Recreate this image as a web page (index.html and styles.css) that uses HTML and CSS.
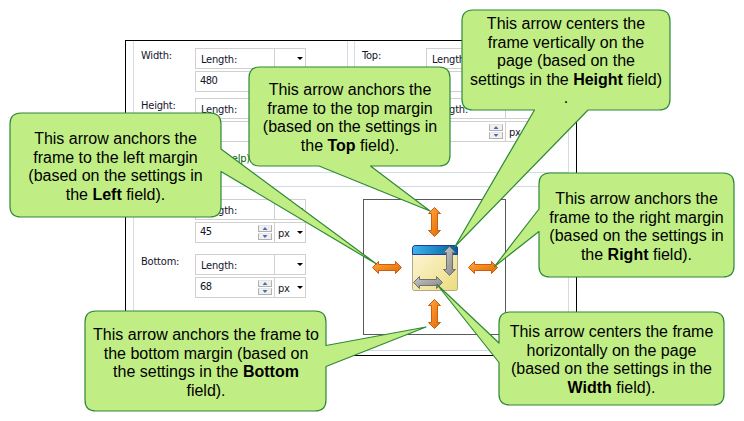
FILE: index.html
```html
<!DOCTYPE html>
<html lang="en">
<head>
<meta charset="utf-8">
<title>Frame position arrows</title>
<link rel="stylesheet" href="styles.css">
</head>
<body>
<main class="figure">
  <section class="dialog">
    <div class="top-row">
      <div class="group">
        <div class="row"><label class="label">Width:</label>
          <div class="fields">
            <div class="combo"><span class="value">Length:</span><span class="drop"><i class="caret"></i></span></div>
            <div class="combo"><span class="number">480</span><span class="drop"></span></div>
          </div>
        </div>
        <div class="row"><label class="label">Height:</label>
          <div class="fields">
            <div class="combo"><span class="value">Length:</span><span class="drop"></span></div>
            <div class="combo"><span class="number"></span><span class="drop"></span></div>
          </div>
        </div>
        <div class="help">(help)</div>
      </div>
      <div class="group">
        <div class="row"><label class="label label-wide">Top:</label>
          <div class="fields">
            <div class="combo"><span class="value">Length:</span><span class="drop"></span></div>
            <div class="combo"><span class="number"></span><span class="drop"></span></div>
          </div>
        </div>
        <div class="row"><label class="label label-wide"></label>
          <div class="fields">
            <div class="combo"><span class="value">Length:</span><span class="drop"></span></div>
            <div class="combo"><span class="number"></span><span class="spin"><b><i class="up"></i></b><b><i class="down"></i></b></span><span class="drop unit">px<i class="caret"></i></span></div>
          </div>
        </div>
      </div>
    </div>
    <div class="group bottom-row">
      <div class="column">
        <div class="row"><label class="label"></label>
          <div class="fields">
            <div class="combo"><span class="value">Length:</span><span class="drop"><i class="caret"></i></span></div>
            <div class="combo"><span class="number">45</span><span class="spin"><b><i class="up"></i></b><b><i class="down"></i></b></span><span class="drop unit">px<i class="caret"></i></span></div>
          </div>
        </div>
        <div class="row"><label class="label">Bottom:</label>
          <div class="fields">
            <div class="combo"><span class="value">Length:</span><span class="drop"><i class="caret"></i></span></div>
            <div class="combo"><span class="number">68</span><span class="spin"><b><i class="up"></i></b><b><i class="down"></i></b></span><span class="drop unit">px<i class="caret"></i></span></div>
          </div>
        </div>
      </div>
      <svg class="preview" width="143" height="136" viewBox="363 199 143 136">
        <defs>
          <linearGradient id="orange" x1="0" y1="0" x2="1" y2="1"><stop offset="0" stop-color="#ffa94d"/><stop offset=".45" stop-color="#f58a20"/><stop offset="1" stop-color="#d96a08"/></linearGradient>
          <linearGradient id="gray" x1="0" y1="0" x2="1" y2="1"><stop offset="0" stop-color="#c8c8c8"/><stop offset="1" stop-color="#858585"/></linearGradient>
          <linearGradient id="bar"><stop offset="0" stop-color="#3cb4f0"/><stop offset="1" stop-color="#005f98"/></linearGradient>
          <linearGradient id="page" x1="0" y1="0" x2="1" y2="1"><stop offset="0" stop-color="#fff6dc"/><stop offset="1" stop-color="#eadd80"/></linearGradient>
          <path id="vertical" d="M0 -14.5 L6 -8.500 H3 V8.500 H6 L0 14.500 L-6 8.500 H-3 V-8.500 H-6 Z"/>
          <path id="horizontal" d="M-14.500 0 L-8.500 -6 V-3 H8.500 V-6 L14.500 0 L8.500 6 V3 H-8.500 V6 Z"/>
        </defs>
        <rect x="363.5" y="199.5" width="142" height="135" fill="#fff" stroke="#595959"/>
        <rect x="412.5" y="245.5" width="45" height="45" rx="2" fill="url(#page)" stroke="#b5aa82"/>
        <path d="M412.5 254.5 V247.5 L414.5 245.5 H455.5 L457.5 247.5 V254.5 Z" fill="url(#bar)" stroke="#243a9c"/>
        <g fill="url(#orange)" stroke="#cf5c0c">
          <use href="#vertical" x="434.5" y="222"/>
          <use href="#vertical" x="434.5" y="314"/>
          <use href="#horizontal" x="387" y="267.5"/>
          <use href="#horizontal" x="483" y="267.5"/>
        </g>
        <g fill="url(#gray)" stroke="#707070">
          <use href="#vertical" x="449.5" y="261"/>
          <use href="#horizontal" x="428" y="282.5"/>
        </g>
      </svg>
    </div>
  </section>

  <svg class="bubbles" width="744" height="421" viewBox="0 0 744 421">
    <path d="M21 113H210Q221 113 221 124V149L376.500 264L221 171.500V206Q221 217 210 217H21Q10 217 10 206V124Q10 113 21 113Z"/>
    <path d="M260 67H439Q450 67 450 78V155Q450 166 439 166H370.500L430 211L319 166H260Q249 166 249 155V78Q249 67 260 67Z"/>
    <path d="M473 10H659Q670 10 670 21V99Q670 110 659 110H588L455 246.500L534.500 110H473Q462 110 462 99V21Q462 10 473 10Z"/>
    <path d="M550 173H723Q734 173 734 184V266Q734 277 723 277H550Q539 277 539 266V231.500L494.500 266.500L539 209V184Q539 173 550 173Z"/>
    <path d="M510 312H713Q724 312 724 323V394Q724 405 713 405H510Q499 405 499 394V362.500L437 284.500L499 343V323Q499 312 510 312Z"/>
    <path d="M96 311H315Q326 311 326 322V345.500L426 327L326 366.500V400Q326 411 315 411H96Q85 411 85 400V322Q85 311 96 311Z"/>
  </svg>

  <p class="note note-left">This arrow anchors the<br>frame to the left margin<br>(based on the settings in<br>the <strong>Left</strong> field).</p>
  <p class="note note-top">This arrow anchors the<br>frame to the top margin<br>(based on the settings in<br>the <strong>Top</strong> field).</p>
  <p class="note note-height">This arrow centers the<br>frame vertically on the<br>page (based on the<br>settings in the <strong>Height</strong> field)<br>.</p>
  <p class="note note-right">This arrow anchors the<br>frame to the right margin<br>(based on the settings in<br>the <strong>Right</strong> field).</p>
  <p class="note note-width">This arrow centers the frame<br>horizontally on the page<br>(based on the settings in the<br><strong>Width</strong> field).</p>
  <p class="note note-bottom">This arrow anchors the frame to<br>the bottom margin (based on<br>the settings in the <strong>Bottom</strong><br>field).</p>
</main>
</body>
</html>
```

FILE: styles.css
```css
* { box-sizing: border-box; }
body { margin: 0; background: #fff; }
.figure {
  position: relative;
  width: 744px;
  height: 421px;
  padding: 40px 0 0 125px;
  overflow: hidden;
}
.dialog {
  width: 452px;
  height: 316px;
  padding: 0 7px;
  border: 1px solid #000;
  font: 11px/13px "DejaVu Sans Condensed", "DejaVu Sans", sans-serif;
  letter-spacing: -0.2px;
  color: #14142a;
}
.top-row { display: flex; justify-content: space-between; }
.group {
  width: 215px;
  height: 132px;
  padding: 7px 0 0 7px;
  border: 1px solid #d3dce6;
  border-top: 0;
}
.row { display: flex; height: 50px; }
.label { width: 54px; padding-top: 1px; }
.label-wide { width: 64px; }
.fields { display: flex; flex-direction: column; gap: 2px; }
.combo {
  display: flex;
  width: 111px;
  height: 21px;
  border: 1px solid #d0d0d0;
}
.value { flex: 1; padding: 4px 0 0 5px; }
.number { flex: 1; padding: 2px 0 0 4px; letter-spacing: -0.5px; }
.drop {
  display: flex;
  justify-content: flex-end;
  width: 31px;
  padding: 4px 1px 0 3px;
  border-left: 1px solid #d0d0d0;
}
.unit { justify-content: space-between; }
.caret {
  width: 6px;
  height: 3px;
  margin: 4px 1px 0 0;
  background: #000;
  clip-path: polygon(0 0, 100% 0, 50% 100%);
}
.spin {
  display: flex;
  flex-direction: column;
  gap: 1px;
  width: 14px;
  height: 15px;
  margin: 2px 2px 0 0;
}
.spin b {
  display: flex;
  align-items: center;
  justify-content: center;
  flex: 1;
  border: 1px solid #b0b0b0;
  border-top-color: #e4e4e4;
  background: #f0f0f0;
}
.spin i { width: 5px; height: 3px; background: #5068b8; }
.up { clip-path: polygon(50% 0, 100% 100%, 0 100%); }
.down { clip-path: polygon(0 0, 100% 0, 50% 100%); }
.help { width: 109px; margin-top: 4px; text-align: right; color: #006400; }
.bottom-row {
  display: flex;
  justify-content: space-between;
  width: 436px;
  height: 165px;
  margin-top: 13px;
  padding: 12px 62px 0 7px;
  border-top: 1px solid #d3dce6;
}
.bottom-row .row { height: 55px; }
.bubbles { position: absolute; left: 0; top: 0; }
.bubbles path { fill: #c1ee84; stroke: #2f8838; stroke-width: 1.2; stroke-linejoin: round; }
.note {
  position: absolute;
  margin: 0;
  transform: translateX(-50%);
  font: 16px/18.5px "Liberation Sans", Arial, sans-serif;
  color: #000;
  text-align: center;
  white-space: nowrap;
}
.note-left { left: 115.5px; top: 130px; }
.note-top { left: 350px; top: 81px; }
.note-height { left: 566px; top: 15px; }
.note-right { left: 636.5px; top: 190px; }
.note-width { left: 611.5px; top: 323px; }
.note-bottom { left: 206px; top: 326px; }
```
